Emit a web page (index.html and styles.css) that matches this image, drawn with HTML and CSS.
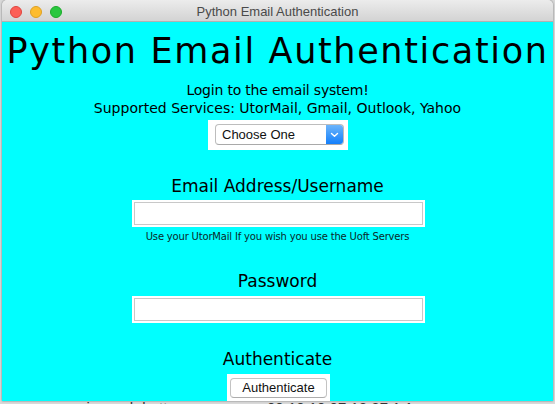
FILE: index.html
```html
<!DOCTYPE html>
<html>
<head>
<meta charset="utf-8">
<title>Python Email Authentication</title>
<link rel="stylesheet" href="styles.css">
</head>
<body>
<div class="window">
  <div class="titlebar">
    <div class="lights">
      <span class="light red"></span>
      <span class="light yellow"></span>
      <span class="light green"></span>
    </div>
    <div class="title">Python Email Authentication</div>
  </div>
  <div class="content">
    <h1 class="heading">Python Email Authentication</h1>
    <p class="intro intro-first">Login to the email system!</p>
    <p class="intro">Supported Services: UtorMail, Gmail, Outlook, Yahoo</p>
    <div class="holder popup-holder">
      <div class="popup">
        <span class="popup-text">Choose One</span>
        <span class="popup-arrow">
          <svg width="9" height="6" viewBox="0 0 9 6"><path d="M1.5 1.5 L4.5 4.3 L7.5 1.5" fill="none" stroke="#fff" stroke-width="1.4" stroke-linecap="round" stroke-linejoin="round"/></svg>
        </span>
      </div>
    </div>
    <div class="label label-email">Email Address/Username</div>
    <div class="holder entry-holder entry-email"><input class="entry" type="text"></div>
    <div class="hint">Use your UtorMail If you wish you use the Uoft Servers</div>
    <div class="label label-pass">Password</div>
    <div class="holder entry-holder entry-pass"><input class="entry" type="password"></div>
    <div class="label label-auth">Authenticate</div>
    <div class="holder button-holder"><button class="button" type="button">Authenticate</button></div>
  </div>
</div>
<p class="behind">answer is much better = <span class="link">answer</span> ... 00 10 10:07 12 27 1 1</p>
</body>
</html>
```
FILE: styles.css
```css
html, body {
  margin: 0;
  padding: 0;
}
body {
  background: #d9d9d9;
  width: 555px;
  height: 404px;
  overflow: hidden;
  font-family: "DejaVu Sans", sans-serif;
}
.window {
  margin-left: 2px;
  width: 551px;
  height: 401px;
  display: flex;
  flex-direction: column;
  box-shadow: 0 0 2px rgba(0,0,0,0.55);
  border-radius: 5px 5px 0 0;
  overflow: hidden;
  position: relative;
  z-index: 1;
}
.titlebar {
  height: 21px;
  flex: none;
  background: linear-gradient(#ececec, #d3d3d3);
  border-bottom: 1px solid #b1b1b1;
  display: flex;
  align-items: center;
  position: relative;
}
.lights {
  display: flex;
  gap: 8px;
  padding-left: 8px;
  padding-top: 3px;
}
.light {
  width: 12px;
  height: 12px;
  border-radius: 50%;
  box-sizing: border-box;
}
.red { background: #fc5f57; border: 0.5px solid #e0443e; }
.yellow { background: #fdbc2e; border: 0.5px solid #dea123; }
.green { background: #29c73f; border: 0.5px solid #1aab29; }
.title {
  position: absolute;
  left: 0;
  right: 0;
  top: 4px;
  text-align: center;
  font-family: "Liberation Sans", Arial, sans-serif;
  font-size: 13px;
  color: #4a4a4a;
  line-height: 16px;
}
.content {
  flex: 1;
  background: #00ffff;
  display: flex;
  flex-direction: column;
  align-items: center;
  overflow: hidden;
  color: #000;
}
.heading {
  margin: 9px 0 0;
  font-weight: normal;
  font-size: 35px;
  line-height: 40px;
  letter-spacing: 1.65px;
  white-space: nowrap;
}
.intro {
  margin: 0;
  font-size: 14px;
  line-height: 18px;
  white-space: nowrap;
}
.intro-first {
  margin-top: 10px;
  letter-spacing: -0.2px;
}
.holder {
  background: #fff;
  box-sizing: border-box;
}
.popup-holder {
  margin-top: 3px;
  width: 140px;
  height: 30px;
  padding: 4px 4px 5px 7px;
  margin-left: 1px;
}
.popup {
  height: 21px;
  box-sizing: border-box;
  border: 1px solid #bdbdbd;
  border-bottom-color: #a9a9a9;
  border-radius: 4px;
  display: flex;
  overflow: hidden;
  font-family: "Liberation Sans", Arial, sans-serif;
  font-size: 13px;
}
.popup-text {
  flex: 1;
  padding-left: 6px;
  line-height: 19px;
  color: #111;
}
.popup-arrow {
  width: 17px;
  background: linear-gradient(#6cb5fb, #137ffb);
  display: flex;
  align-items: center;
  justify-content: center;
}
.label {
  font-size: 17px;
  line-height: 20px;
  white-space: nowrap;
}
.label-email { margin-top: 26px; }
.label-pass { margin-top: 28px; }
.label-auth { margin-top: 26px; }
.entry-holder {
  width: 293px;
  height: 27px;
  padding: 2px;
  margin-left: 2px;
}
.entry-email { margin-top: 4px; }
.entry-pass { margin-top: 5px; }
.entry {
  display: block;
  width: 100%;
  height: 100%;
  box-sizing: border-box;
  margin: 0;
  border: 1px solid #c8c8c8;
  background: #fff;
  outline: none;
  padding: 0 4px;
}
.hint {
  margin-top: 4px;
  font-size: 10px;
  line-height: 12px;
  letter-spacing: -0.18px;
  color: #0b2a2a;
  white-space: nowrap;
}
.button-holder {
  margin-top: 5px;
  width: 103px;
  height: 27px;
  padding: 4px 3px;
  margin-left: 2px;
}
.button {
  display: block;
  width: 97px;
  height: 20px;
  margin: 0;
  padding: 0;
  box-sizing: border-box;
  background: #fff;
  border: 1px solid #c3c3c3;
  border-bottom-color: #adadad;
  border-radius: 4px;
  font-family: "Liberation Sans", Arial, sans-serif;
  font-size: 13px;
  color: #111;
  line-height: 18px;
}
.behind {
  margin: 0 0 0 34px;
  font-family: "Liberation Sans", Arial, sans-serif;
  font-size: 15px;
  line-height: 16px;
  color: #333;
  white-space: nowrap;
  margin-top: -1px;
}
.link { color: #2a5db0; }
```
